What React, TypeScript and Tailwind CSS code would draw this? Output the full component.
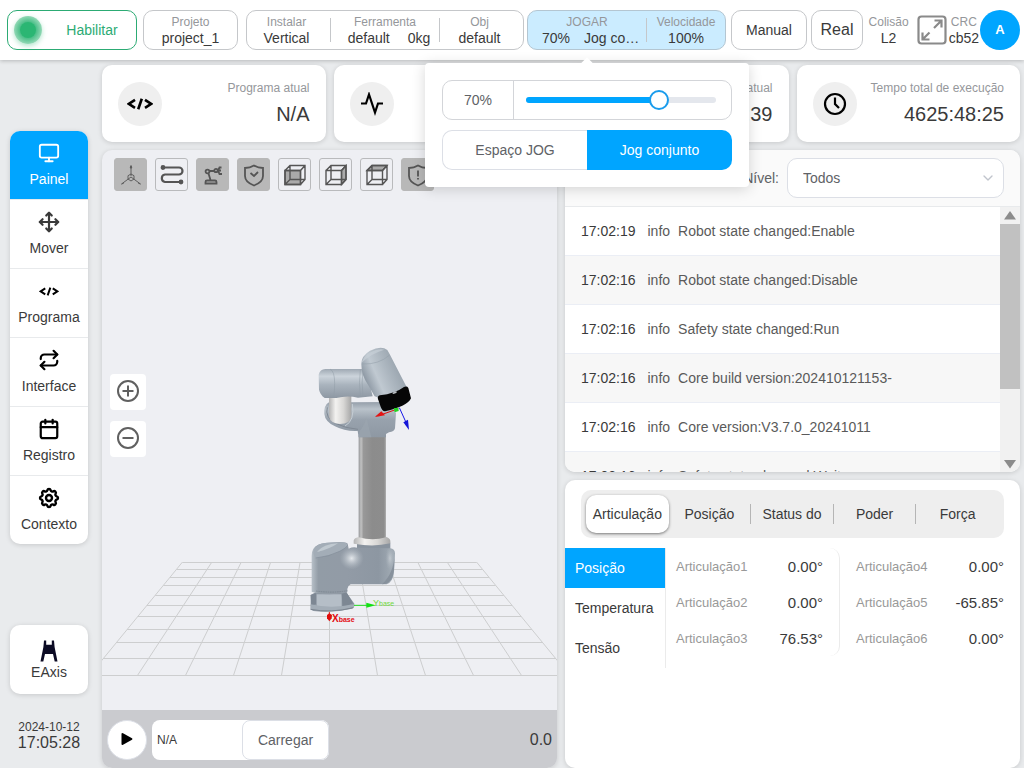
import { useState, type ReactNode } from "react";
import { Calendar, Monitor, Move, Repeat, ChevronDown } from "lucide-react";
import { TbSettings } from "react-icons/tb";

const LABEL = "text-xs leading-4 text-[#95979b]";
const VALUE = "text-sm leading-4 text-[#3a3a3a]";

function CodeIcon({ className }: { className: string }) {
  return (
    <svg viewBox="0 0 26 12" className={className} fill="none" stroke="currentColor" strokeWidth="2.6" aria-hidden="true">
      <path d="M8 1.8 1.8 5.8 8 9.8M18 1.8l6.200 4-6.200 4M14.800.8l-3.600 10.400" />
    </svg>
  );
}

function PulseIcon() {
  return (
    <svg viewBox="0 0 24 24" className="size-6" fill="none" stroke="currentColor" strokeWidth="2.2" aria-hidden="true">
      <path d="M1 11.500h5L9 2.500l6 18 3-9h5" />
    </svg>
  );
}

function ClockIcon() {
  return (
    <svg viewBox="0 0 24 24" className="size-6" fill="none" stroke="currentColor" strokeWidth="2.2" aria-hidden="true">
      <circle cx="12" cy="12" r="10" />
      <path d="M12 5.500V12l4 4" />
    </svg>
  );
}

function EAxisIcon() {
  return (
    <svg viewBox="0 0 18 22" className="h-[22px] w-[18px]" fill="#0c0b24" aria-hidden="true">
      <path d="M4 .5h2.200v4.200h5.600V.5H14l.6 6.500L17.500 21.500h-2.800L13 14H5l-1.700 7.500H.5L3.400 7z" />
    </svg>
  );
}

function Segment({ label, children, className = "" }: { label: string; children: ReactNode; className?: string }) {
  return (
    <div className={`flex flex-col items-center justify-center ${className}`}>
      <span className={LABEL}>{label}</span>
      <span className={`flex ${VALUE}`}>{children}</span>
    </div>
  );
}

function Divider() {
  return <span className="h-6 w-px shrink-0 bg-[#c5c7ca]" />;
}

function SpeedPopover() {
  const [speed, setSpeed] = useState(70);
  return (
    <div className="absolute top-[52px] -left-[103px] z-20 w-[324px] rounded bg-white p-[17px] shadow-[0_2px_14px_rgba(0,0,0,0.16)]">
      <span className="absolute -top-1 left-[158px] size-2 rotate-45 bg-white" />
      <div className="flex h-10 items-center rounded-[10px] border border-[#d3d5d9]">
        <span className="flex h-full w-[71px] items-center justify-center border-r border-[#d3d5d9] text-sm text-[#606266]">
          {speed}%
        </span>
        <div className="relative mr-[15px] ml-3 flex h-5 flex-1 items-center">
          <div className="h-1.5 w-full overflow-hidden rounded-full bg-[#e4e7ed]">
            <div className="h-full bg-[#00a5ff]" style={{ width: `${speed}%` }} />
          </div>
          <span
            className="absolute size-5 -translate-x-1/2 rounded-full border-2 border-[#1a9cec] bg-white"
            style={{ left: `${speed}%` }}
          />
          <input
            type="range"
            aria-label="Velocidade JOG"
            min={0}
            max={100}
            value={speed}
            onChange={(e) => setSpeed(Number(e.target.value))}
            className="absolute inset-0 w-full cursor-pointer opacity-0"
          />
        </div>
      </div>
      <div className="mt-2.5 grid h-10 grid-cols-2 text-sm">
        <button className="rounded-l-[10px] border border-r-0 border-[#dcdfe6] text-[#606266]">Espaço JOG</button>
        <button className="rounded-r-[10px] bg-[#00a5ff] text-white">Jog conjunto</button>
      </div>
    </div>
  );
}

function Header() {
  const box = "h-10 shrink-0 rounded-[10px] border border-[#c5c7ca] bg-white";
  return (
    <header className="relative z-10 flex h-[60px] shrink-0 items-center bg-white pr-1 pl-[7px] shadow-[0_1px_4px_rgba(0,0,0,0.22)]">
      <button className="mr-1.5 flex h-10 w-[130px] shrink-0 items-center rounded-[10px] border border-[#2cab74] pl-1.5 text-sm text-[#2cab74]">
        <span className="flex size-7 items-center justify-center rounded-full bg-[radial-gradient(closest-side,#4fc08b_60%,#93d9b6_100%)] shadow-[0_2px_5px_rgba(43,182,115,0.35)]">
          <span className="size-4 rounded-full bg-[#2bb673]" />
        </span>
        <span className="flex-1 pl-1.5">Habilitar</span>
      </button>
      <button className={`mr-2 w-[95px] ${box}`}>
        <Segment label="Projeto">project_1</Segment>
      </button>
      <div className={`mr-[3px] flex w-[278px] items-center ${box}`}>
        <Segment label="Instalar" className="w-[83px] pr-1">Vertical</Segment>
        <Divider />
        <Segment label="Ferramenta" className="w-[108px]">
          <span className="mr-[18px] ml-2">default</span>
          <span>0kg</span>
        </Segment>
        <Divider />
        <Segment label="Obj" className="flex-1 pr-1">default</Segment>
      </div>
      <div className="relative mr-[5px] flex h-10 w-[199px] shrink-0 items-center rounded-[10px] border border-[#b4c6d2] bg-[#cbecff]">
        <Segment label="JOGAR" className="w-[118px]">
          <span className="mr-3.5 ml-2">70%</span>
          <span className="w-14 truncate">Jog conjunto</span>
        </Segment>
        <Divider />
        <Segment label="Velocidade" className="flex-1">100%</Segment>
        <SpeedPopover />
      </div>
      <button className={`mr-1 w-[76px] text-sm text-[#3a3a3a] ${box}`}>Manual</button>
      <button className={`w-[52px] text-base text-[#3a3a3a] ${box}`}>Real</button>
      <div className="ml-auto flex items-center">
        <Segment label="Colisão">L2</Segment>
        <button aria-label="Tela cheia" className="mr-0.5 ml-2 text-[#8a8a8a]">
          <svg viewBox="0 0 30 30" className="size-[30px]" fill="none" stroke="currentColor" strokeWidth="2.2" aria-hidden="true">
            <rect x="1.500" y="1.500" width="27" height="27" rx="3" />
            <path d="M17.500 5.500h7v7M24.500 5.500l-7.500 7.500M5.500 17.500v7h7M5.500 24.500l7-7" />
          </svg>
        </button>
        <Segment label="CRC">cb52</Segment>
        <button className="ml-px size-10 rounded-full bg-[#00a5ff] text-[13px] font-bold text-white">A</button>
      </div>
    </header>
  );
}

const navItems = [
  { label: "Painel", icon: <Monitor className="size-[22px]" /> },
  { label: "Mover", icon: <Move className="size-[22px]" strokeWidth={2.4} /> },
  { label: "Programa", icon: <CodeIcon className="h-[9px] w-5 text-black" /> },
  { label: "Interface", icon: <Repeat className="size-[22px] text-black" strokeWidth={2.4} /> },
  { label: "Registro", icon: <Calendar className="size-[22px] text-black" strokeWidth={2.4} /> },
  { label: "Contexto", icon: <TbSettings className="size-6 text-black" strokeWidth={2.4} /> },
];

function Sidebar() {
  return (
    <aside className="flex w-[78px] shrink-0 flex-col pt-[71px] pb-[17px]">
      <nav className="overflow-hidden rounded-[10px] bg-white shadow-[0_1px_5px_rgba(0,0,0,0.15)]">
        {navItems.map((item, i) => (
          <a
            key={item.label}
            href={`#${item.label.toLowerCase()}`}
            className={`flex h-[69px] flex-col items-center border-b border-[#e8eaec] pt-2.5 text-sm last:h-[68px] last:border-b-0 ${
              i === 0 ? "bg-[#00a5ff] text-white" : "text-[#3a3a3a]"
            }`}
          >
            <span className="flex h-6 items-center">{item.icon}</span>
            <span className="mt-1 leading-5">{item.label}</span>
          </a>
        ))}
      </nav>
      <button className="mt-auto flex h-[69px] flex-col items-center justify-end rounded-[10px] bg-white pb-3 text-sm leading-5 text-[#3a3a3a] shadow-[0_1px_5px_rgba(0,0,0,0.15)]">
        <EAxisIcon />
        EAxis
      </button>
      <div className="mt-[25px] text-center text-[#3a3a3a]">
        <div className="text-xs leading-4">2024-10-12</div>
        <div className="text-base leading-4">17:05:28</div>
      </div>
    </aside>
  );
}

function StatCard({ icon, label, value }: { icon: ReactNode; label: string; value: string }) {
  return (
    <section className="flex h-[77px] items-center justify-between rounded-[10px] bg-white px-4 shadow-[0_1px_5px_rgba(0,0,0,0.15)]">
      <span className="flex size-11 shrink-0 items-center justify-center rounded-full bg-[#efefef] text-black">{icon}</span>
      <div className="text-right whitespace-nowrap">
        <div className={LABEL}>{label}</div>
        <div className="mt-1 text-xl leading-7 text-[#3a3a3a]">{value}</div>
      </div>
    </section>
  );
}

const gridRows = [562, 569, 577, 585, 595, 605, 616, 629, 642, 658, 675];
const gridColumns = [-5, -4, -3, -2, -1, 0, 1, 2, 3, 4, 5];

function RobotScene() {
  return (
    <svg viewBox="102 150 455 560" preserveAspectRatio="xMidYMid slice" className="block size-full" role="img" aria-label="Robô">
      <defs>
        <linearGradient id="arm">
          <stop offset="0" stopColor="#8c8d90" />
          <stop offset=".05" stopColor="#b5b6b7" />
          <stop offset=".12" stopColor="#bcbcbc" />
          <stop offset=".16" stopColor="#999" />
          <stop offset=".5" stopColor="#8c8c8c" />
          <stop offset=".93" stopColor="#8d8d8d" />
          <stop offset="1" stopColor="#b0b0b0" />
        </linearGradient>
        <linearGradient id="base">
          <stop offset="0" stopColor="#b7c0c8" />
          <stop offset=".08" stopColor="#929ca6" />
          <stop offset=".42" stopColor="#929ba6" />
          <stop offset=".8" stopColor="#8d97a2" />
          <stop offset="1" stopColor="#a3adb6" />
        </linearGradient>
        <linearGradient id="tube" x1="0" y1="0" x2="0" y2="1">
          <stop offset="0" stopColor="#9fa9b3" />
          <stop offset=".25" stopColor="#ccd4db" />
          <stop offset=".55" stopColor="#a9b3bd" />
          <stop offset="1" stopColor="#8e98a3" />
        </linearGradient>
        <linearGradient id="elbow" x1="0" y1="0" x2="0" y2="1">
          <stop offset="0" stopColor="#949ea9" />
          <stop offset=".2" stopColor="#b9c2ca" />
          <stop offset=".5" stopColor="#98a2ad" />
          <stop offset="1" stopColor="#8e98a3" />
        </linearGradient>
        <linearGradient id="wrist" gradientUnits="userSpaceOnUse" x1="222" y1="135" x2="325" y2="90">
          <stop offset="0" stopColor="#929da8" />
          <stop offset=".3" stopColor="#c0c9d1" />
          <stop offset=".6" stopColor="#adb7c0" />
          <stop offset="1" stopColor="#96a1ab" />
        </linearGradient>
        <linearGradient id="sleeve">
          <stop offset="0" stopColor="#b5b5b5" />
          <stop offset=".3" stopColor="#f3f2f0" />
          <stop offset=".65" stopColor="#d8d7d5" />
          <stop offset="1" stopColor="#a7a7a7" />
        </linearGradient>
        <radialGradient id="shine">
          <stop offset="0" stopColor="#eef1f4" stopOpacity=".9" />
          <stop offset="1" stopColor="#b7c0c8" stopOpacity="0" />
        </radialGradient>
      </defs>
      <g stroke="#cdcecf" strokeWidth="1">
        {gridRows.map((y) => {
          const reach = 147 + ((y - 562) / 113) * 93.500;
          return <line key={y} x1={329.5 - reach} y1={y + 0.5} x2={329.5 + reach} y2={y + 0.5} />;
        })}
        {gridColumns.map((i) => (
          <line key={i} x1={329.5 + 29.4 * i} y1="562" x2={329.5 + 48.1 * i} y2="676" />
        ))}
      </g>
      <g transform="translate(290 330) scale(.33333)">
        <path d="M62 795 78 786h90l24 34q4 12-6 16-60 14-116 7l-8-5z" fill="#8b95a0" />
        <path d="M80 793h75v40q-40 6-75 2z" fill="#b5bec7" />
        <path d="M62 795l16-5v32l-14 5zM155 792l14-6 20 34-31 12z" fill="#7d8793" />
        <path d="M62 823q60 14 130 0v8q-50 18-130 9z" fill="#a3adb7" />
        <path d="M62 838q60 12 128-5" fill="none" stroke="#7b8590" strokeWidth="3" />
        <path d="M201 638h100v20H201z" fill="#89939e" />
        <path
          d="M65 678q-1-25 20-34 12-6 65-8 20 0 23 5l3 15q14-7 26-3l98 2q15 2 15 15l-3 56q-3 30-22 37H182q-8 4-10 14v10q-50 10-95 2l-12-4z"
          fill="url(#base)"
        />
        <path d="M77 684q-18-22 8-40 20-8 75-7 17 3 12 12-8 10-42 23-30 9-53 12z" fill="#a3adb7" />
        <path d="M80 666q20-24 64-26-26 18-64 26z" fill="#c0c9d0" />
        <path d="M77 684q40-4 72-20 20-10 24-18" fill="none" stroke="#828d98" strokeWidth="2" />
        <ellipse cx="185" cy="685" rx="36" ry="34" fill="url(#shine)" />
        <ellipse cx="300" cy="685" rx="14" ry="36" fill="url(#shine)" opacity=".5" />
        <path d="M314 670q-2 60-38 93l12-2q22-10 24-42z" fill="#87919c" />
        <path d="M78 783q50 7 94-1" fill="none" stroke="#747e89" strokeWidth="2" strokeDasharray="5 2" />
        <path d="M191 632q0-9 18-12h78q13 4 14 12v8q-50 12-110 1z" fill="url(#sleeve)" />
        <path d="M206 316h82v306q-40 12-82 0z" fill="url(#arm)" />
        <path
          d="M103 252q-2-26 14-35h70l113-1 18 34-3 45q-2 10-18 12l-9 5v10h-82l-3-19q-38 2-68-14-30-14-32-37z"
          fill="url(#elbow)"
        />
        <path d="M112 232q-8 30 24 48 30 15 68 18" fill="none" stroke="#7f8994" strokeWidth="3" />
        <path d="M229 262q-3 20-20 42l-3 18h38z" fill="#9ba5af" opacity=".7" />
        <path d="M117 195h67v67q-3 20-35 20-28-2-32-22z" fill="url(#sleeve)" />
        <path d="M187 222q8 50-22 66" fill="none" stroke="#c5cdd4" strokeWidth="3" />
        <path d="M86 134q4-16 20-17h122l20 82-44 4q-32-8-65 1H104q-13-9-17-25z" fill="url(#tube)" />
        <path d="M120 117q14 6 14 43t-6 42M211 118q-5 38 0 83M219 119q-5 38 0 81" fill="none" stroke="#909ba6" strokeWidth="1.500" />
        <path d="M214 102q0-25 26-40 34-16 52-2l8 14 53 103-82 28-17-6-20-35q-20-27-20-62z" fill="url(#wrist)" />
        <path d="M217 102q50 2 82-27" fill="none" stroke="#909ba6" strokeWidth="1.500" />
        <path d="M215 98q4-18 24-30 28-14 44-9-40 12-68 39z" fill="#c8d0d7" opacity=".7" />
        <path d="M264 207q-3-8 6-11 45-5 72-25 9-4 13 3l8 31q-10 24-78 39-9-2-13-14z" fill="#060606" />
        <ellipse cx="314" cy="188" rx="7" ry="3" fill="#b7bcc0" transform="rotate(-22 314 188)" />
        <path d="M325 236 266 257" stroke="#d11" strokeWidth="3" />
        <path d="m254 261 20-17 11 12z" fill="#e31414" />
        <path d="m311 235 14-2 1 10-12 4z" fill="#23d523" />
        <path d="m328 233 20 44" stroke="#1717e8" strokeWidth="3" />
        <path d="m357 300-17-23 14-8z" fill="#1515d8" />
        <path d="M192 826h40" stroke="#22dd22" strokeWidth="3" />
        <path d="m229 818 28 8-28 7z" fill="#14e014" />
        <path d="M118 846v10" stroke="#e21" strokeWidth="3" />
        <path d="m111 855 7-5 8 5-1 10-7 9-7-9z" fill="#e00d0d" />
      </g>
      <g fontFamily="Liberation Sans, Arial, sans-serif">
        <text x="332" y="622" fontSize="10" fill="#e30b13" fontWeight="700">
          X<tspan fontSize="7">base</tspan>
        </text>
        <text x="373" y="606" fontSize="9" fill="#70d83c">
          Y<tspan fontSize="7">base</tspan>
        </text>
      </g>
    </svg>
  );
}

const shield = "M12 2.500q4 2.500 9 2.500v8q0 6-9 9.500Q3 19 3 13V5q5 0 9-2.500z";
const cubeLines = "M2 7.500h15.500v14H2zM2 7.500 7 2.500h15v14l-4.500 5M17.500 7.500l4.500-5M7 2.500v14h15M7 16.500l-5 5";

const tools: { label: string; active: boolean; art: ReactNode }[] = [
  {
    label: "Eixos",
    active: true,
    art: (
      <g strokeWidth=".9">
        <path d="M12 3v10M12 14 2.500 21M12 14l9.500 7" />
        <path d="m12 11 3 1.700v3.300L12 18l-3-2v-3.300z" />
        <path d="M11.200 5 12 2.500l.8 2.500zM2.500 21l2.300-.8M21.500 21l-2.300-.8" />
      </g>
    ),
  },
  {
    label: "Trajetória",
    active: false,
    art: (
      <g strokeWidth="2.200">
        <path d="M2.500 4.500H19a3.500 3.500 0 0 1 0 7H5a3.800 3.800 0 0 0 0 7.500h16.500" />
        <circle cx="3" cy="4.500" r="1.300" fill="currentColor" />
        <circle cx="21" cy="19" r="1.300" fill="currentColor" />
      </g>
    ),
  },
  {
    label: "Robô",
    active: true,
    art: (
      <g strokeWidth="1.800">
        <path d="M6 17.500h8q1.500 0 1.500 1.500v1.500H4.500V19q0-1.500 1.500-1.500zM9.500 17 7.500 10.500M8.500 8h5" />
        <circle cx="6.500" cy="8.500" r="1.900" />
        <circle cx="15" cy="7.500" r="1.700" />
        <path d="M20.500 4.500h-2l-1.500 3 1.500 3.500h2.500M18 7.500h2" />
      </g>
    ),
  },
  {
    label: "Segurança",
    active: true,
    art: (
      <g strokeWidth="1.800">
        <path d={shield} />
        <path d="m8.500 10 3.500 3 4-4" />
      </g>
    ),
  },
  {
    label: "Vista frontal",
    active: false,
    art: (
      <g strokeWidth="1.400">
        <path d="M2 7.500h15.500v14H2z" fill="#aaa" />
        <path d={cubeLines} />
      </g>
    ),
  },
  {
    label: "Vista lateral",
    active: false,
    art: (
      <g strokeWidth="1.400">
        <path d="m17.500 7.500 4.500-5v14l-4.500 5z" fill="#aaa" />
        <path d={cubeLines} />
      </g>
    ),
  },
  {
    label: "Vista superior",
    active: false,
    art: (
      <g strokeWidth="1.400">
        <path d="m2 7.500 5-5h15l-4.500 5z" fill="#aaa" />
        <path d={cubeLines} />
      </g>
    ),
  },
  {
    label: "Alerta",
    active: true,
    art: (
      <g strokeWidth="1.800">
        <path d={shield} />
        <path d="M12 7.500v6M12 15v1.500" />
      </g>
    ),
  },
];

function Viewer() {
  return (
    <section className="flex min-h-0 flex-col overflow-hidden rounded-[10px] bg-[#eeeff3] shadow-[0_1px_5px_rgba(0,0,0,0.15)]">
      <div className="relative min-h-0 flex-1">
        <RobotScene />
        <div className="absolute top-2 left-3 flex gap-2">
          {tools.map((tool) => (
            <button
              key={tool.label}
              aria-label={tool.label}
              className={`flex size-[33px] items-center justify-center rounded-[3px] border text-[#555] ${
                tool.active ? "border-[#b8b8b8] bg-[#b8b8b8]" : "border-[#b9babc]"
              }`}
            >
              <svg viewBox="0 0 24 24" className="size-6" fill="none" stroke="currentColor" aria-hidden="true">
                {tool.art}
              </svg>
            </button>
          ))}
        </div>
        <div className="absolute top-[224px] left-2 flex flex-col gap-[11px] text-[#606060]">
          {["M12 6.500v11M6.500 12h11", "M6.500 12h11"].map((d, i) => (
            <button
              key={d}
              aria-label={i === 0 ? "Ampliar" : "Reduzir"}
              className="flex size-9 items-center justify-center rounded bg-white pb-0.5"
            >
              <svg viewBox="0 0 24 24" className="size-6" fill="none" stroke="currentColor" strokeWidth="2" aria-hidden="true">
                <circle cx="12" cy="12" r="10" />
                <path d={d} />
              </svg>
            </button>
          ))}
        </div>
      </div>
      <div className="flex h-[58px] shrink-0 items-center bg-[#cacbcf] px-[5px] pt-0.5">
        <button aria-label="Reproduzir" className="flex size-10 items-center justify-center rounded-full border border-[#dcdfe6] bg-white pb-0.5">
          <svg viewBox="0 0 12 14" className="h-3.5 w-3" aria-hidden="true">
            <path d="M.5 2Q.5.500 2 1.200l9 5q1 .8 0 1.600l-9 5Q.5 13.500.5 12z" fill="#000" />
          </svg>
        </button>
        <div className="ml-[5px] flex h-10 w-[177px] rounded-lg bg-white">
          <input
            aria-label="Programa"
            defaultValue="N/A"
            className="w-[90px] min-w-0 rounded-l-lg bg-transparent pl-[5px] text-xs text-[#3a3a3a] outline-none"
          />
          <button className="flex-1 rounded-lg border border-[#dcdfe6] bg-white text-sm text-[#606266]">Carregar</button>
        </div>
        <span className="ml-auto text-base text-[#3a3a3a]">0.0</span>
      </div>
    </section>
  );
}

const logs = [
  ["17:02:19", "Robot state changed:Enable"],
  ["17:02:16", "Robot state changed:Disable"],
  ["17:02:16", "Safety state changed:Run"],
  ["17:02:16", "Core build version:202410121153-"],
  ["17:02:16", "Core version:V3.7.0_20241011"],
  ["17:02:16", "Safety state changed:Wait"],
];

function LogPanel() {
  return (
    <section className="flex h-[322px] shrink-0 flex-col overflow-hidden rounded-[10px] bg-white shadow-[0_1px_5px_rgba(0,0,0,0.15)]">
      <div className="flex h-[57px] shrink-0 items-center justify-end border-b border-[#e8eaec] bg-[#fafafa] pr-4 text-sm text-[#606266]">
        <label htmlFor="level" className="mr-2">
          Nível:
        </label>
        <div className="relative h-10 w-[217px]">
          <select
            id="level"
            className="size-full appearance-none rounded-[10px] border border-[#dcdfe6] bg-white pl-[15px] text-sm text-[#606266]"
          >
            <option>Todos</option>
          </select>
          <ChevronDown className="pointer-events-none absolute top-3 right-2 size-4 text-[#c0c4cc]" strokeWidth={2} />
        </div>
      </div>
      <div className="flex min-h-0 flex-1">
        <ul className="min-w-0 flex-1 overflow-hidden text-sm">
          {logs.map(([time, message], i) => (
            <li
              key={i}
              className="flex h-[49px] items-center border-b border-[#ebeef5] pl-4 whitespace-nowrap text-[#5a5a5a] even:bg-[#f7f7f7]"
            >
              <span className="mr-3 text-[#3a3a3a]">{time}</span>
              <span className="mr-2">info</span>
              <span>{message}</span>
            </li>
          ))}
        </ul>
        <div className="flex w-5 shrink-0 flex-col items-center bg-[#f1f1f1]" aria-hidden="true">
          <svg viewBox="0 0 20 17" className="h-[17px] w-5 shrink-0">
            <path d="M10 4l6 8.500H4z" fill="#8b8b8b" />
          </svg>
          <span className="h-[165px] w-full bg-[#c1c1c1]" />
          <svg viewBox="0 0 20 17" className="mt-auto h-[17px] w-5 shrink-0">
            <path d="M10 13.500 4 5h12z" fill="#8b8b8b" />
          </svg>
        </div>
      </div>
    </section>
  );
}

function JointTable({ rows }: { rows: string[][] }) {
  return (
    <table className="w-full">
      <tbody>
        {rows.map(([name, value]) => (
          <tr key={name} className="h-9">
            <th scope="row" className="pt-0.5 text-left text-[13px] font-normal text-[#999]">
              {name}
            </th>
            <td className="pt-0.5 text-right text-[15px] text-[#3a3a3a]">{value}</td>
          </tr>
        ))}
      </tbody>
    </table>
  );
}

function StatePanel() {
  const tabs = ["Articulação", "Posição", "Status do", "Poder", "Força"];
  const sections = ["Posição", "Temperatura", "Tensão"];
  return (
    <section className="min-h-0 flex-1 rounded-[10px] bg-white pt-2.5 shadow-[0_1px_5px_rgba(0,0,0,0.15)]">
      <div className="mx-4 grid h-12 grid-cols-5 items-center rounded-[10px] bg-[#eee] px-[5px] text-sm text-[#3a3a3a]">
        {tabs.map((tab, i) => (
          <button
            key={tab}
            className={
              i === 0
                ? "h-[38px] rounded-[10px] bg-white shadow-[0_1px_3px_rgba(0,0,0,0.5)]"
                : "h-5 border-r border-[#b5b5b5] leading-5 last:border-r-0"
            }
          >
            {tab}
          </button>
        ))}
      </div>
      <div className="mt-2.5 flex">
        <div className="flex w-[101px] shrink-0 flex-col border-r border-[#ebebeb] text-sm">
          {sections.map((name, i) => (
            <button
              key={name}
              className={`h-10 pl-2.5 text-left ${i === 0 ? "bg-[#00a5ff] text-white" : "text-[#3a3a3a]"}`}
            >
              {name}
            </button>
          ))}
        </div>
        <div className="h-[108px] flex-1 rounded-[10px] border-r border-[#ebebeb] pr-4 pl-2.5">
          <JointTable
            rows={[
              ["Articulação1", "0.00°"],
              ["Articulação2", "0.00°"],
              ["Articulação3", "76.53°"],
            ]}
          />
        </div>
        <div className="w-[180px] shrink-0 px-4">
          <JointTable
            rows={[
              ["Articulação4", "0.00°"],
              ["Articulação5", "-65.85°"],
              ["Articulação6", "0.00°"],
            ]}
          />
        </div>
      </div>
    </section>
  );
}

export default function App() {
  return (
    <div className="flex h-screen flex-col overflow-hidden bg-[#e9ebed] font-['Liberation_Sans',Arial,sans-serif]">
      <Header />
      <div className="flex min-h-0 flex-1 gap-3.5 pr-1 pl-2.5">
        <Sidebar />
        <main className="flex min-w-0 flex-1 flex-col gap-2 pt-[5px]">
          <div className="grid shrink-0 grid-cols-4 gap-2">
            <StatCard icon={<CodeIcon className="h-3 w-[26px]" />} label="Programa atual" value="N/A" />
            <StatCard icon={<PulseIcon />} label="Estado atual" value="Parado" />
            <StatCard icon={<ClockIcon />} label="Tempo atual" value="00:00:39" />
            <StatCard icon={<ClockIcon />} label="Tempo total de execução" value="4625:48:25" />
          </div>
          <div className="grid min-h-0 flex-1 grid-cols-2 gap-2">
            <Viewer />
            <div className="flex min-h-0 flex-col gap-2">
              <LogPanel />
              <StatePanel />
            </div>
          </div>
        </main>
      </div>
    </div>
  );
}
